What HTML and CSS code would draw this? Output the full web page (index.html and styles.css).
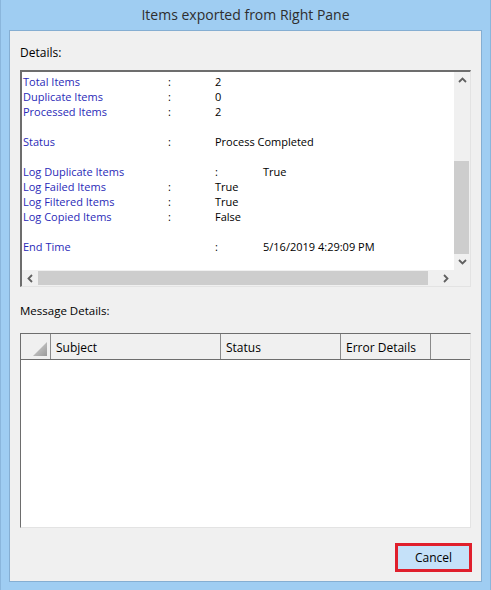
FILE: index.html
```html
<!DOCTYPE html>
<html lang="en">
<head>
  <meta charset="UTF-8" />
  <title>Items exported from Right Pane</title>
  <link rel="stylesheet" href="styles.css">
</head>
<body>
  <div class="window">
    <div class="title-bar">Items exported from Right Pane</div>

    <div class="client">
      <div class="section-label">Details:</div>

      <!-- log box with scroll bars -->
      <div class="details">
        <div class="details-text">
          <div class="row"><span class="key">Total Items</span><span class="colon">:</span><span class="val">2</span></div>
          <div class="row"><span class="key">Duplicate Items</span><span class="colon">:</span><span class="val">0</span></div>
          <div class="row"><span class="key">Processed Items</span><span class="colon">:</span><span class="val">2</span></div>
          <div class="row blank"></div>
          <div class="row"><span class="key">Status</span><span class="colon">:</span><span class="val">Process Completed</span></div>
          <div class="row blank"></div>
          <div class="row shifted"><span class="key">Log Duplicate Items</span><span class="colon">:</span><span class="val">True</span></div>
          <div class="row"><span class="key">Log Failed Items</span><span class="colon">:</span><span class="val">True</span></div>
          <div class="row"><span class="key">Log Filtered Items</span><span class="colon">:</span><span class="val">True</span></div>
          <div class="row"><span class="key">Log Copied Items</span><span class="colon">:</span><span class="val">False</span></div>
          <div class="row blank"></div>
          <div class="row shifted"><span class="key">End Time</span><span class="colon">:</span><span class="val">5/16/2019 4:29:09 PM</span></div>
        </div>

        <div class="vscroll">
          <span class="arrow">
            <svg width="9" height="6" viewBox="0 0 9 6"><polyline points="1,5 4.5,1.5 8,5" fill="none" stroke="#606060" stroke-width="1.8"/></svg>
          </span>
          <div class="vtrack"><div class="vthumb"></div></div>
          <span class="arrow">
            <svg width="9" height="6" viewBox="0 0 9 6"><polyline points="1,1 4.5,4.5 8,1" fill="none" stroke="#606060" stroke-width="1.8"/></svg>
          </span>
        </div>

        <div class="hscroll">
          <span class="arrow">
            <svg width="6" height="9" viewBox="0 0 6 9"><polyline points="5,1 1.5,4.5 5,8" fill="none" stroke="#606060" stroke-width="1.8"/></svg>
          </span>
          <div class="htrack"><div class="hthumb"></div></div>
          <span class="arrow">
            <svg width="6" height="9" viewBox="0 0 6 9"><polyline points="1,1 4.5,4.5 1,8" fill="none" stroke="#606060" stroke-width="1.8"/></svg>
          </span>
        </div>
        <div class="corner"></div>
      </div>

      <div class="section-label second">Message Details:</div>

      <!-- message grid -->
      <div class="grid">
        <div class="grid-head">
          <div class="cell corner-cell">
            <svg width="14" height="14" viewBox="0 0 14 14">
              <defs>
                <linearGradient id="tri" x1="0" y1="0" x2="1" y2="1">
                  <stop offset="0" stop-color="#d8d8d8"/>
                  <stop offset="1" stop-color="#9a9a9a"/>
                </linearGradient>
              </defs>
              <polygon points="14,0 14,14 0,14" fill="url(#tri)"/>
            </svg>
          </div>
          <div class="cell col-subject">Subject</div>
          <div class="cell col-status">Status</div>
          <div class="cell col-error">Error Details</div>
          <div class="cell col-rest"></div>
        </div>
        <div class="grid-body"></div>
      </div>

      <div class="buttons">
        <button class="cancel">Cancel</button>
      </div>
    </div>
  </div>
</body>
</html>
```

FILE: styles.css
```css
body {
  margin: 0;
  font-family: "Segoe UI", "Open Sans", "Noto Sans", sans-serif;
  font-size: 12px;
  background: #9fcdf2;
}
/* outer window frame */
.window {
  width: 491px;
  height: 590px;
  box-sizing: border-box;
  padding: 0 8px 8px 8px;
  border-left: 1px solid #8ab6dc;
  border-right: 1px solid #8ab6dc;
  display: flex;
  flex-direction: column;
}
.title-bar {
  height: 30px;
  line-height: 30px;
  text-align: center;
  font-size: 14px;
  color: #2e2e2e;
}
.client {
  flex: 1;
  background: #f0f0f0;
  border: 1px solid #85aed2;
  padding: 0 10px;
  display: flex;
  flex-direction: column;
}
.section-label {
  padding-top: 14px;
  line-height: 16px;
  height: 16px;
  color: #000;
  margin-bottom: 9px;
}
.section-label.second {
  padding-top: 16px;
  margin-bottom: 14px;
  font-size: 11.5px;
}

/* details box */
.details {
  height: 217px;
  box-sizing: border-box;
  border-top: 2px solid #6d6d6d;
  border-left: 2px solid #6d6d6d;
  border-right: 1px solid #e3e3e3;
  border-bottom: 1px solid #e3e3e3;
  background: #fff;
  display: grid;
  grid-template-columns: 1fr 16px;
  grid-template-rows: 1fr 16px;
}
.details-text {
  padding: 2px 0 0 1px;
  overflow: hidden;
}
.row {
  display: grid;
  grid-template-columns: 145px 47px 48px auto;
  height: 15px;
  line-height: 15px;
  font-size: 11px;
  white-space: nowrap;
}
.key {
  color: #2a2ab8;
}
.colon {
  color: #000;
}
.val {
  color: #000;
}
.row.shifted .colon {
  grid-column: 3;
}
.row.shifted .val {
  grid-column: 4;
}

.vscroll {
  background: #f0f0f0;
  display: flex;
  flex-direction: column;
  align-items: stretch;
}
.vscroll .arrow {
  height: 16px;
  display: flex;
  align-items: center;
  justify-content: center;
}
.vtrack {
  flex: 1;
  display: flex;
  flex-direction: column;
  justify-content: flex-end;
}
.vthumb {
  height: 93px;
  background: #cdcdcd;
  margin: 0 1px 0 0;
}
.hscroll {
  background: #f0f0f0;
  display: flex;
  align-items: stretch;
}
.hscroll .arrow {
  width: 16px;
  display: flex;
  align-items: center;
  justify-content: center;
}
.htrack {
  flex: 1;
  padding: 1px 0;
  display: flex;
}
.hthumb {
  flex: 1;
  background: #cdcdcd;
  margin-right: 10px;
}
.corner {
  background: #f0f0f0;
}

/* message grid */
.grid {
  height: 195px;
  box-sizing: border-box;
  border-top: 1px solid #6d6d6d;
  border-left: 1px solid #6d6d6d;
  border-right: 1px solid #e3e3e3;
  border-bottom: 1px solid #e3e3e3;
  background: #fff;
  display: flex;
  flex-direction: column;
}
.grid-head {
  display: flex;
  height: 25px;
  border-bottom: 1px solid #6d6d6d;
  background: #f0f0f0;
}
.cell {
  box-sizing: border-box;
  border-right: 1px solid #8a8a8a;
  padding-left: 5px;
  line-height: 27px;
  font-size: 12px;
  color: #000;
}
.corner-cell {
  width: 30px;
  padding: 0 3px 3px 0;
  display: flex;
  align-items: flex-end;
  justify-content: flex-end;
}
.col-subject {
  width: 170px;
}
.col-status {
  width: 120px;
}
.col-error {
  width: 90px;
}
.col-rest {
  flex: 1;
  border-right: none;
}
.grid-body {
  flex: 1;
}

.buttons {
  display: flex;
  justify-content: flex-end;
  margin-top: 15px;
}
.cancel {
  width: 77px;
  height: 29px;
  box-sizing: border-box;
  border: 3px solid #e01f2c;
  background: #c5e1f9;
  font-family: inherit;
  font-size: 12px;
  color: #000;
  margin-right: -1px;
  padding: 0;
}
```
